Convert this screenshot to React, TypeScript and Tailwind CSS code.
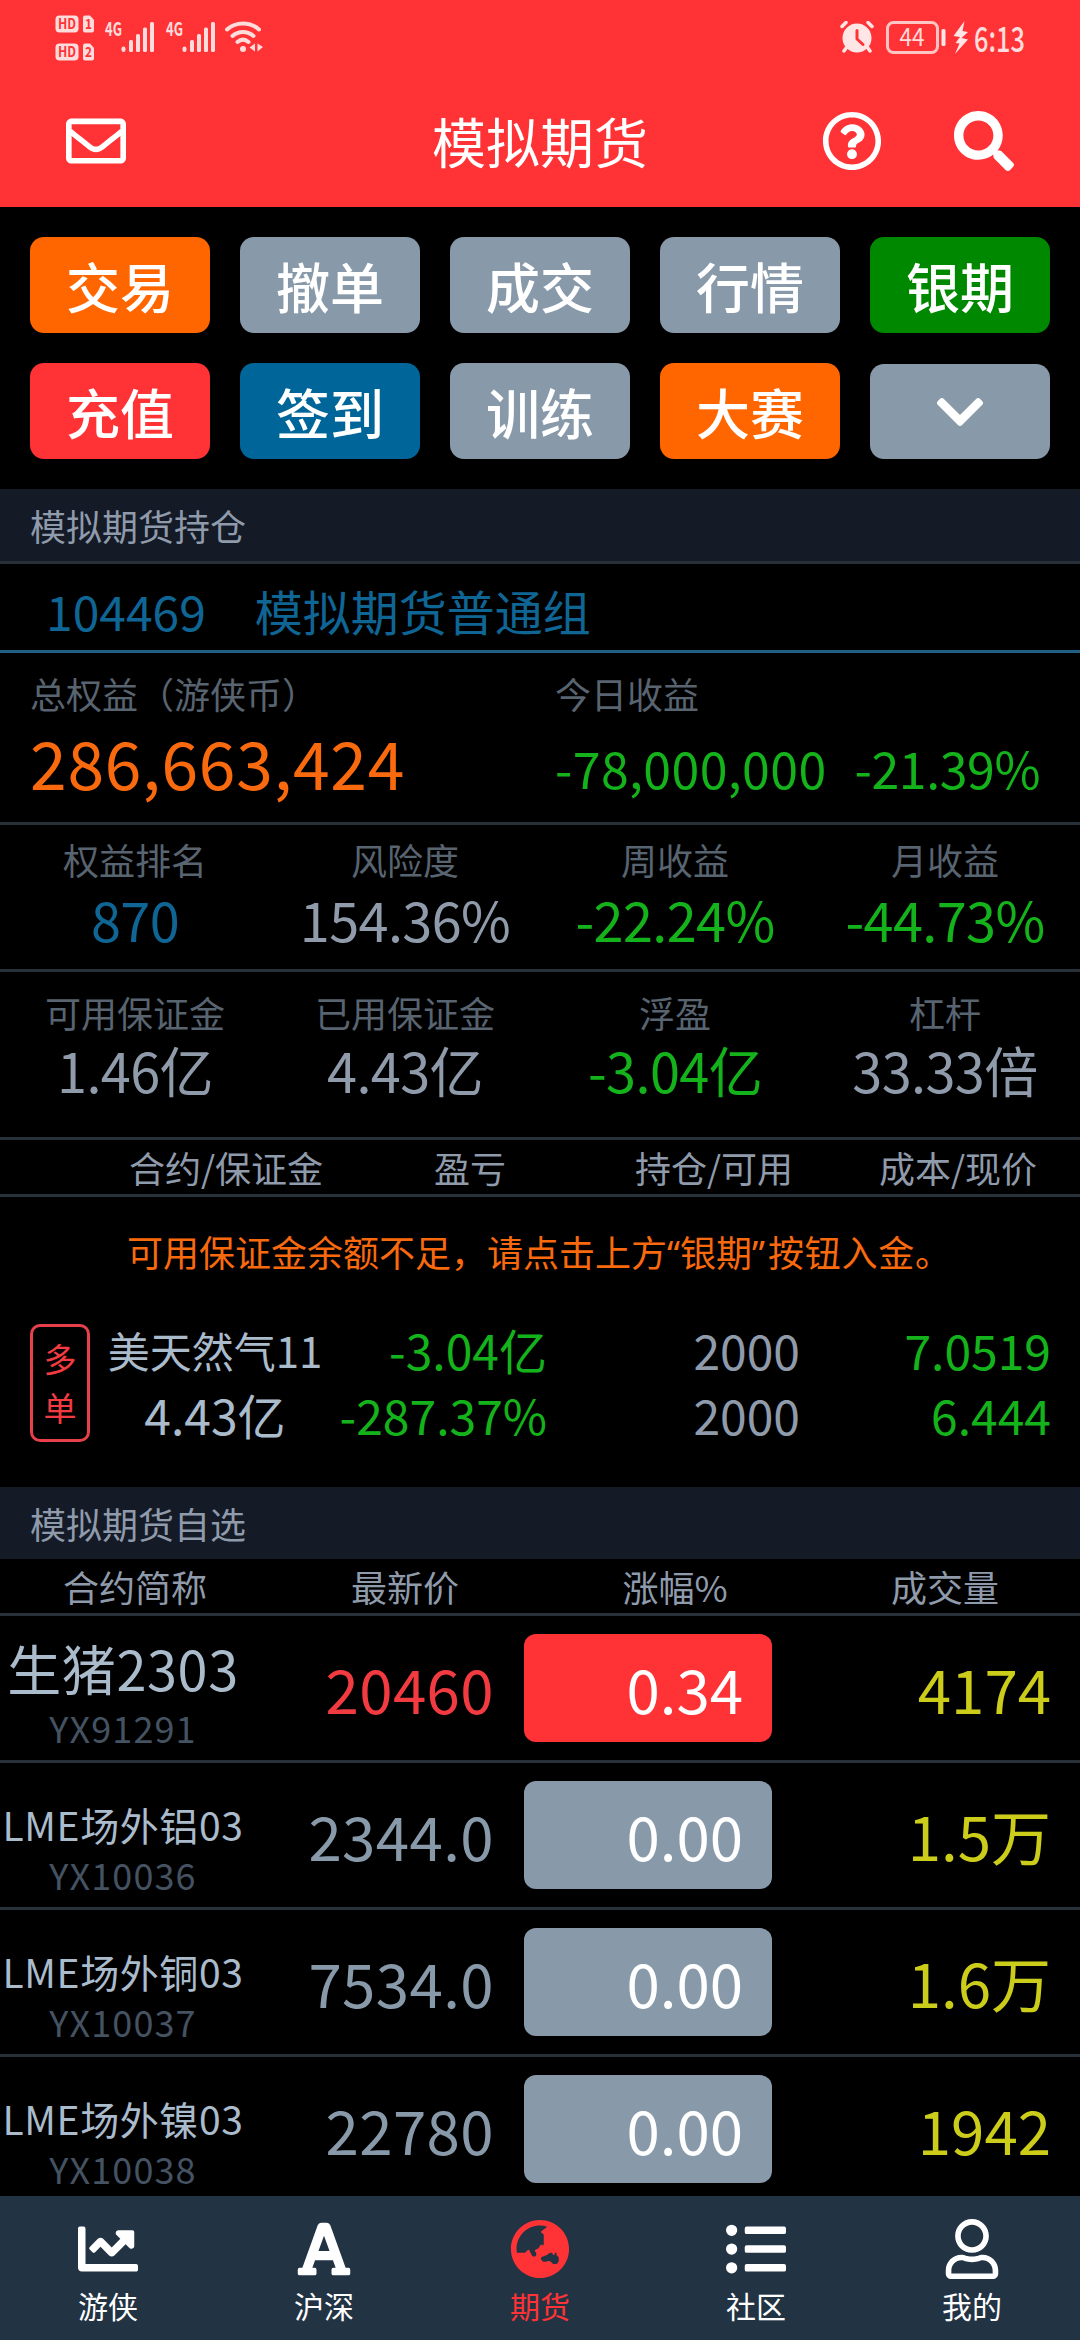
import type { ReactNode } from "react";
import type { IconType } from "react-icons";
import {
  FaChartLine,
  FaChevronDown,
  FaFont,
  FaGlobeAsia,
  FaListUl,
  FaRegEnvelope,
  FaRegQuestionCircle,
  FaRegUser,
  FaSearch,
} from "react-icons/fa";

interface Stat {
  label: string;
  value: string;
  color: string;
}

interface Quote {
  name: string;
  code: string;
  price: string;
  change: string;
  volume: string;
  up?: boolean;
  large?: boolean;
}

const actions = [
  { label: "交易", bg: "bg-[#ff6600]" },
  { label: "撤单", bg: "bg-[#8899aa]" },
  { label: "成交", bg: "bg-[#8899aa]" },
  { label: "行情", bg: "bg-[#8899aa]" },
  { label: "银期", bg: "bg-[#008800]" },
  { label: "充值", bg: "bg-[#ff3336]" },
  { label: "签到", bg: "bg-[#006699]" },
  { label: "训练", bg: "bg-[#8899aa]" },
  { label: "大赛", bg: "bg-[#ff6600]" },
];

const performance: Stat[] = [
  { label: "权益排名", value: "870", color: "text-[#0f6695]" },
  { label: "风险度", value: "154.36%", color: "text-[#8f9bab]" },
  { label: "周收益", value: "-22.24%", color: "text-[#14b31b]" },
  { label: "月收益", value: "-44.73%", color: "text-[#14b31b]" },
];

const margin: Stat[] = [
  { label: "可用保证金", value: "1.46亿", color: "text-[#8f9bab]" },
  { label: "已用保证金", value: "4.43亿", color: "text-[#8f9bab]" },
  { label: "浮盈", value: "-3.04亿", color: "text-[#14b31b]" },
  { label: "杠杆", value: "33.33倍", color: "text-[#8f9bab]" },
];

const quotes: Quote[] = [
  { name: "生猪2303", code: "YX91291", price: "20460", change: "0.34", volume: "4174", up: true, large: true },
  { name: "LME场外铝03", code: "YX10036", price: "2344.0", change: "0.00", volume: "1.5万" },
  { name: "LME场外铜03", code: "YX10037", price: "7534.0", change: "0.00", volume: "1.6万" },
  { name: "LME场外镍03", code: "YX10038", price: "22780", change: "0.00", volume: "1942" },
];

const tabs: { label: string; icon: IconType; active?: boolean }[] = [
  { label: "游侠", icon: FaChartLine },
  { label: "沪深", icon: FaFont },
  { label: "期货", icon: FaGlobeAsia, active: true },
  { label: "社区", icon: FaListUl },
  { label: "我的", icon: FaRegUser },
];

function SimBadge({ n }: { n: number }) {
  return (
    <svg className="overflow-visible" width="40" height="18" viewBox="0 0 40 18">
      <rect x="0.5" y="0.5" width="23" height="17" rx="4" fill="#ffdcdc" />
      <text x="3" y="14" fontSize="14" fontWeight="700" fill="#ff3336" textLength="18" lengthAdjust="spacingAndGlyphs">
        HD
      </text>
      <path d="M30 0.5h5l4 4.500v10.500a2 2 0 0 1-2 2h-7a2 2 0 0 1-2-2v-13a2 2 0 0 1 2-2z" fill="#ffdcdc" />
      <text x="30" y="14" fontSize="14" fontWeight="700" fill="#ff3336" textLength="7" lengthAdjust="spacingAndGlyphs">
        {n}
      </text>
    </svg>
  );
}

function Signal() {
  return (
    <svg className="overflow-visible" width="50" height="32" viewBox="0 0 50 32" fill="#ffdcdc">
      <text x="0" y="15" fontSize="19" fontWeight="700" textLength="17" lengthAdjust="spacingAndGlyphs">
        4G
      </text>
      <rect x="16.500" y="25.500" width="4" height="5.500" rx="2" />
      <rect x="24" y="19" width="4" height="12" rx="1.500" />
      <rect x="31" y="13" width="4" height="18" rx="1.500" />
      <rect x="38" y="6.500" width="4" height="24.500" rx="1.500" />
      <rect x="45" y="1" width="4" height="30" rx="1.500" />
    </svg>
  );
}

function Wifi() {
  return (
    <svg width="39" height="32" viewBox="0 0 39 32" fill="none" stroke="#ffdcdc" strokeWidth="4" strokeLinecap="round">
      <path d="M2 8.500c9-8 23-8 32 0M7.500 15c6-5.500 15-5.500 21 0M12.500 21c3.500-3 7.500-3 11 0" />
      <circle cx="18" cy="28" r="3" fill="#ffdcdc" stroke="none" />
      <path d="M30 22.500v8l-5.500-4zM32.500 22.500l5.500 3.500-5.500 4.500z" fill="#ffdcdc" stroke="none" />
    </svg>
  );
}

function AlarmClock() {
  return (
    <svg width="34" height="32" viewBox="0 0 34 32" fill="none" strokeLinecap="round">
      <circle cx="17" cy="17" r="14.500" fill="#ffe6e6" />
      <path d="M2 5.500l4-4M32 5.500l-4-4M4 30l2.500-3.500M30 30l-2.500-3.500" stroke="#ffe6e6" strokeWidth="3.500" />
      <path d="M17 9.500v8.500l6 5.500" stroke="#ff3336" strokeWidth="3" strokeLinejoin="round" />
    </svg>
  );
}

function StatusBar() {
  return (
    <div className="flex h-[75px] items-start justify-between pr-[55px] pl-[55px]">
      <div className="flex">
        <div className="flex flex-col gap-[10px] pt-[15px]">
          <SimBadge n={1} />
          <SimBadge n={2} />
        </div>
        <div className="ml-[10px] flex gap-[11px] pt-[21px]">
          <Signal />
          <Signal />
        </div>
        <div className="ml-[9px] pt-[21px]">
          <Wifi />
        </div>
      </div>
      <div className="flex pt-[21px]">
        <AlarmClock />
        <svg className="ml-[12px] overflow-visible" width="61" height="33" viewBox="0 0 61 33">
          <rect x="1.500" y="1.500" width="50" height="30" rx="6" fill="none" stroke="#ffc4c4" strokeWidth="3" />
          <rect x="55.500" y="8" width="4" height="17" rx="1.500" fill="#ffe6e6" />
          <text x="13.500" y="25" fontSize="25" fill="#ffdcdc" textLength="25" lengthAdjust="spacingAndGlyphs">
            44
          </text>
        </svg>
        <svg className="ml-[6px]" width="16" height="33" viewBox="0 0 16 33" fill="#ffe6e6">
          <path d="M11.500 0L0.500 15l6.500 1-4.500 6 4 0.500L2 33l13-14.500-6.500-1.500L15 11l-5.500-1z" />
        </svg>
        <svg className="ml-[5px] overflow-visible" width="51" height="33" viewBox="0 0 51 33">
          <text x="0" y="30.500" fontSize="35" fontWeight="500" fill="#ffdcdc" textLength="51" lengthAdjust="spacingAndGlyphs">
            6:13
          </text>
        </svg>
      </div>
    </div>
  );
}

function SectionTitle({ children }: { children: ReactNode }) {
  return (
    <div className="h-[72px] shrink-0 bg-[#141a26] pl-[30px] text-[36px] leading-[72px] text-[#8f9bab]">
      {children}
    </div>
  );
}

function StatCell({ stat, valueClass }: { stat: Stat; valueClass: string }) {
  return (
    <div className="text-center">
      <div className="text-[36px] leading-[48px] text-[#596471]">{stat.label}</div>
      <div className={`text-[54px] tracking-[-0.6px] ${valueClass} ${stat.color}`}>{stat.value}</div>
    </div>
  );
}

function QuoteRow({ quote }: { quote: Quote }) {
  return (
    <div className="flex h-[147px] shrink-0 items-center border-b-3 border-[#28303a]">
      <div className="h-full w-[246px] text-center whitespace-nowrap">
        {quote.large ? (
          <div className="pt-[18px] text-[54px] leading-[68px] tracking-[0.6px] text-[#aabbcc]">{quote.name}</div>
        ) : (
          <div className="pt-[36px] text-[39px] leading-[50px] tracking-[0.6px] text-[#aabbcc]">{quote.name}</div>
        )}
        <div className="text-[36px] leading-[50px] tracking-[1.1px] text-[#445261]">{quote.code}</div>
      </div>
      <div className={`w-[248px] text-right text-[60px] leading-[108px] tracking-[0.4px] ${quote.up ? "text-[#f23b40]" : "text-[#8899aa]"}`}>
        {quote.price}
      </div>
      <div
        className={`ml-[30px] h-[108px] w-[248px] rounded-[12px] pr-[29px] text-right text-[60px] leading-[108px] text-white ${
          quote.up ? "bg-[#ff3336]" : "bg-[#8899aa]"
        }`}
      >
        {quote.change}
      </div>
      <div className="flex-1 pr-[29px] text-right text-[60px] leading-[108px] text-[#cccc1a]">{quote.volume}</div>
    </div>
  );
}

export default function App() {
  return (
    <div className="flex h-[2340px] w-[1080px] flex-col overflow-hidden bg-black font-['Noto_Sans_CJK_SC',sans-serif]">
      <header className="h-[207px] shrink-0 bg-[#ff3336] text-white">
        <StatusBar />
        <div className="grid h-[132px] grid-cols-3 items-center pr-[66px] pl-[66px]">
          <FaRegEnvelope size={60} />
          <h1 className="text-center text-[54px] leading-[132px]">模拟期货</h1>
          <div className="flex justify-end gap-[72px]">
            <FaRegQuestionCircle size={60} />
            <FaSearch size={60} />
          </div>
        </div>
      </header>

      <div className="grid shrink-0 grid-cols-5 gap-[30px] p-[30px]">
        {actions.map((a) => (
          <button
            key={a.label}
            className={`h-[96px] rounded-[14px] pt-[2px] text-[54px] leading-[94px] font-medium text-white ${a.bg}`}
          >
            {a.label}
          </button>
        ))}
        <button className="mt-px flex h-[95px] items-center justify-center rounded-[14px] bg-[#8899aa] text-white">
          <FaChevronDown size={54} />
        </button>
      </div>

      <SectionTitle>模拟期货持仓</SectionTitle>
      <div className="flex h-[92px] shrink-0 gap-[49px] border-t-3 border-b-3 border-t-[#28303a] border-b-[#215f84] pt-[3px] pl-[46px] text-[48px] leading-[86px] text-[#0f6695]">
        <span>104469</span>
        <span>模拟期货普通组</span>
      </div>

      <div className="flex h-[172px] shrink-0 border-b-3 border-[#28303a] pt-[13px] pl-[30px]">
        <div className="w-[525px]">
          <div className="text-[36px] leading-[54px] text-[#596471]">总权益（游侠币）</div>
          <div className="text-[66px] leading-[82px] tracking-[0.8px] text-[#f96a0e]">286,663,424</div>
        </div>
        <div>
          <div className="text-[36px] leading-[54px] text-[#596471]">今日收益</div>
          <div className="flex gap-[28px] text-[50px] leading-[94px] text-[#14b31b]">
            <span className="tracking-[0.4px]">-78,000,000</span>
            <span className="tracking-[-0.4px]">-21.39%</span>
          </div>
        </div>
      </div>

      <div className="grid h-[147px] shrink-0 grid-cols-4 border-b-3 border-[#28303a] pt-[10px]">
        {performance.map((s) => (
          <StatCell key={s.label} stat={s} valueClass="leading-[71px]" />
        ))}
      </div>
      <div className="grid h-[168px] shrink-0 grid-cols-4 border-b-3 border-[#28303a] pt-[16px]">
        {margin.map((s) => (
          <StatCell key={s.label} stat={s} valueClass="leading-[68px]" />
        ))}
      </div>

      <div className="flex h-[57px] shrink-0 border-b-3 border-[#28303a] pr-[43px] pl-[129px] text-[36px] leading-[54px] text-[#8f9bab]">
        <span className="w-[305px]">合约/保证金</span>
        <span className="w-[201px]">盈亏</span>
        <span className="flex-1">持仓/可用</span>
        <span>成本/现价</span>
      </div>

      <div className="h-[108px] shrink-0 pl-[127px] text-[36px] leading-[108px] whitespace-nowrap text-[#f96a0e]">
        可用保证金余额不足，请点击上方<span className="font-['Noto_Sans']">“</span>银期
        <span className="font-['Noto_Sans']">”</span>
        <span className="ml-[3px] tracking-[0.8px]">按钮入金。</span>
      </div>

      <div className="flex h-[182px] shrink-0 pt-[12px] pr-[29px] pl-[30px] text-[48px] leading-[65px]">
        <div className="mt-[7px] flex h-[118px] w-[60px] flex-col items-center justify-center rounded-[10px] border-3 border-[#e8404a] text-[33px] leading-[49px] text-[#f23b40]">
          <span>多</span>
          <span>单</span>
        </div>
        <div className="ml-[10px] w-[230px] text-center text-[#aabbcc]">
          <div className="h-[65px] text-[42px]">美天然气11</div>
          <div>4.43亿</div>
        </div>
        <div className="w-[217px] text-right text-[#14b31b]">
          <div>-3.04亿</div>
          <div>-287.37%</div>
        </div>
        <div className="w-[253px] text-right text-[#8f9bab]">
          <div>2000</div>
          <div>2000</div>
        </div>
        <div className="flex-1 text-right text-[#14b31b]">
          <div>7.0519</div>
          <div>6.444</div>
        </div>
      </div>

      <SectionTitle>模拟期货自选</SectionTitle>
      <div className="grid h-[57px] shrink-0 grid-cols-4 border-b-3 border-[#28303a] text-center text-[36px] leading-[54px] text-[#8f9bab]">
        <span>合约简称</span>
        <span>最新价</span>
        <span>涨幅%</span>
        <span>成交量</span>
      </div>
      <div className="flex min-h-0 flex-1 flex-col overflow-hidden">
        {quotes.map((q) => (
          <QuoteRow key={q.code} quote={q} />
        ))}
      </div>

      <nav className="grid h-[144px] shrink-0 grid-cols-5 bg-[#223344] pt-[23px]">
        {tabs.map(({ label, icon: Icon, active }) => (
          <div key={label} className={`flex flex-col items-center ${active ? "text-[#ff3336]" : "text-white"}`}>
            <Icon size={60} />
            <span className="text-[30px] leading-[52px]">{label}</span>
          </div>
        ))}
      </nav>
    </div>
  );
}
